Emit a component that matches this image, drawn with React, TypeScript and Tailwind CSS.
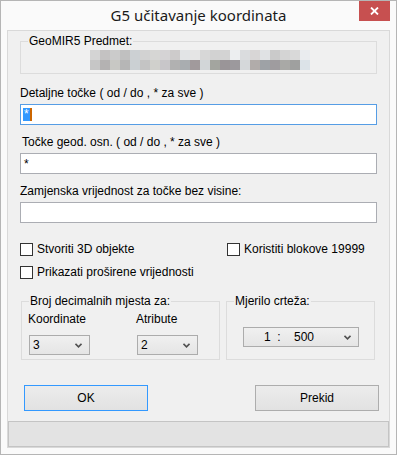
import React from "react";

const row1 = ["#d4d4d4","#c4c2c2","#cbcbcb","#c0c0c0","#ccd0d3","#d2d2d2","#d6d6d4","#d5d3d5","#cdcbcb","#e2e4e6","#e5e5e5","#d7d7d7","#d2d2d2","#d3d3d3","#eceef0","#dadcde","#d8d6d6","#e0e2e4","#cacaca","#d4d4d4","#d9d9d9","#eaecef"];
const row2 = ["#c6c6c6","#b4b2b2","#c8c8c4","#b6b6b6","#cbd0d3","#c4c4c4","#d0d0cc","#c8c6c9","#b1b1b1","#a9adb0","#a19a9c","#d2d6d8","#a3a59f","#9a9598","#9c999d","#d5d8da","#b1acaa","#9ea2a6","#9f9c9f","#a9a9a6","#9fa09f","#dce3e8"];

function Chevron() {
  return (
    <svg width="7" height="5" viewBox="0 0 7 5" className="shrink-0">
      <path d="M0.5 0.8 L3.5 3.8 L6.5 0.8" fill="none" stroke="#505050" strokeWidth="1.6" />
    </svg>
  );
}

function Checkbox({ label }: { label: string }) {
  return (
    <div className="flex items-center gap-[4px]">
      <div className="w-[13px] h-[13px] border border-[#333333] bg-white shrink-0" />
      <span>{label}</span>
    </div>
  );
}

function Combo({ value, w }: { value: string; w: string }) {
  return (
    <div className={`${w} h-[20px] border border-[#acacac] bg-gradient-to-b from-[#f0f0f0] to-[#e5e5e5] flex items-center justify-between pl-[3px] pr-[7px]`}>
      <span>{value}</span>
      <Chevron />
    </div>
  );
}

export default function App() {
  return (
    <div className="w-[397px] h-[455px] border border-[#b5b5b5] bg-[#fafafa] flex flex-col font-['Liberation_Sans',Arial,sans-serif] text-[12px] leading-[14px] text-black">
      <div className="relative h-[29px] flex items-center justify-center">
        <span className="font-['Noto_Sans',sans-serif] text-[15px] leading-none text-[#1a1a1a]">G5 učitavanje koordinata</span>
        <div className="absolute top-0 right-[6px] w-[31px] h-[20px] bg-[#c75050] flex items-center justify-center">
          <svg width="9" height="8" viewBox="0 0 9 8">
            <path d="M1 0.5 L8 7.5 M8 0.5 L1 7.5" stroke="white" strokeWidth="1.8" />
          </svg>
        </div>
      </div>
      <div className="mx-[6px] mb-[6px] flex-1 border border-[#d9d9d9] bg-[#f0f0f0] flex flex-col">
        <div className="flex-1 flex flex-col pl-[12px] pr-[12px]">
          <fieldset className="mt-[3px] border border-[#dcdcdc] pb-[3px]">
            <legend className="ml-[7px] px-[1px]">GeoMIR5 Predmet:</legend>
            <div className="ml-[69px] mt-[2px] flex flex-col">
              <div className="flex">
                {row1.map((c, i) => (
                  <div key={i} className="w-[10px] h-[10px]" style={{ backgroundColor: c }} />
                ))}
              </div>
              <div className="flex">
                {row2.map((c, i) => (
                  <div key={i} className="w-[10px] h-[10px]" style={{ backgroundColor: c }} />
                ))}
              </div>
            </div>
          </fieldset>

          <div className="mt-[12px]">Detaljne točke ( od / do , * za sve )</div>
          <div className="mt-[4px] h-[21px] border border-[#569de5] bg-white flex items-center pl-[2px]">
            <span className="bg-[#3399ff] text-white h-[13px] leading-[13px] px-[1px]">*</span>
            <span className="w-[2px] h-[13px] bg-[#cc6600]" />
          </div>

          <div className="mt-[10px] pl-[2px]">Točke geod. osn. ( od / do , * za sve )</div>
          <div className="mt-[4px] h-[21px] border border-[#abadb3] bg-white flex items-center pl-[3px]">
            <span>*</span>
          </div>

          <div className="mt-[10px]">Zamjenska vrijednost za točke bez visine:</div>
          <div className="mt-[4px] h-[21px] border border-[#abadb3] bg-white" />

          <div className="mt-[19px] flex items-center">
            <div className="w-[207px]">
              <Checkbox label="Stvoriti 3D objekte" />
            </div>
            <Checkbox label="Koristiti blokove 19999" />
          </div>
          <div className="mt-[9px] flex">
            <Checkbox label="Prikazati proširene vrijednosti" />
          </div>

          <div className="mt-[15px] flex">
            <fieldset className="ml-[1px] w-[199px] h-[66px] border border-[#dcdcdc]">
              <legend className="ml-[7px] px-[1px]">Broj decimalnih mjesta za:</legend>
              <div className="flex mt-[4px]">
                <div className="ml-[6px] w-[108px] flex flex-col">
                  <span>Koordinate</span>
                  <div className="mt-[9px] ml-[1px]">
                    <Combo value="3" w="w-[61px]" />
                  </div>
                </div>
                <div className="flex flex-col">
                  <span>Atribute</span>
                  <div className="mt-[9px] ml-[1px]">
                    <Combo value="2" w="w-[61px]" />
                  </div>
                </div>
              </div>
            </fieldset>
            <fieldset className="ml-[6px] w-[149px] h-[66px] border border-[#dcdcdc]">
              <legend className="ml-[7px] px-[1px]">Mjerilo crteža:</legend>
              <div className="mt-[19px] ml-[16px] w-[116px] h-[20px] border border-[#acacac] bg-gradient-to-b from-[#f0f0f0] to-[#e5e5e5] flex items-center justify-between pr-[7px]">
                <span className="pl-[20px] whitespace-pre">1  :    500</span>
                <Chevron />
              </div>
            </fieldset>
          </div>

          <div className="mt-[25px] flex justify-between pl-[4px]">
            <div className="w-[124px] h-[26px] border border-[#3399ff] bg-gradient-to-b from-[#ececec] to-[#e2e2e2] flex items-center justify-center">OK</div>
            <div className="mr-[-2px] w-[124px] h-[26px] border border-[#adadad] bg-gradient-to-b from-[#ececec] to-[#e2e2e2] flex items-center justify-center">Prekid</div>
          </div>
        </div>
        <div className="h-[26px] border border-[#c4c4c4] bg-[#e3e3e3]" />
      </div>
    </div>
  );
}
